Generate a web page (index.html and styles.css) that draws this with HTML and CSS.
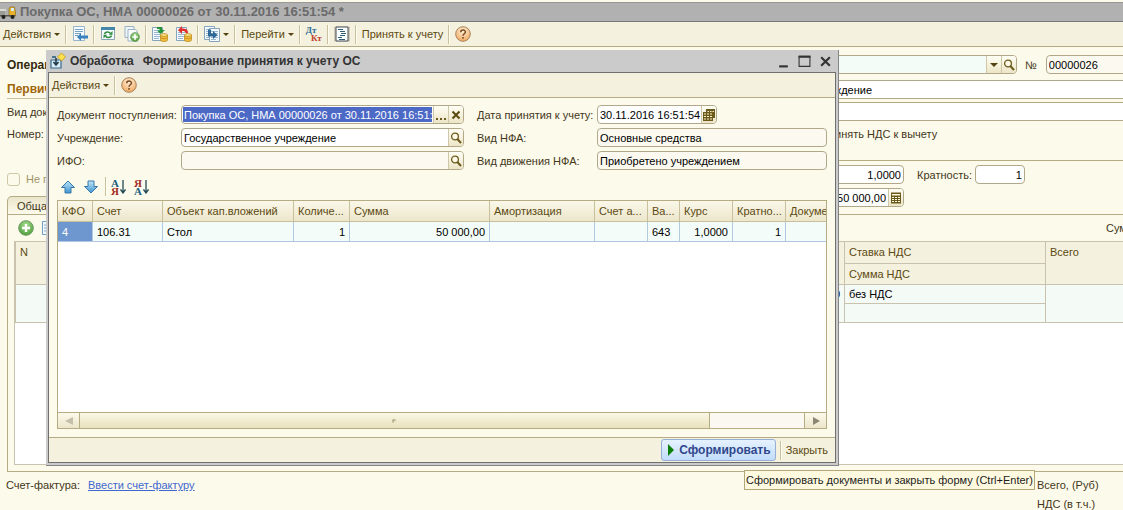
FILE: index.html
```html
<!DOCTYPE html>
<html lang="ru">
<head>
<meta charset="utf-8">
<title>Покупка ОС, НМА</title>
<link rel="stylesheet" href="styles.css">
</head>
<body>
<svg class="defs" aria-hidden="true">
  <defs>
    <linearGradient id="blue" x1="0" y1="0" x2="0" y2="1"><stop offset="0" stop-color="#bfe6fb"/><stop offset="1" stop-color="#3f93d0"/></linearGradient>
    <radialGradient id="orange" cx="0.5" cy="0.3" r="0.7"><stop offset="0" stop-color="#fff0d8"/><stop offset="1" stop-color="#f0a860"/></radialGradient>
    <radialGradient id="green" cx="0.5" cy="0.3" r="0.7"><stop offset="0" stop-color="#a8dc90"/><stop offset="1" stop-color="#4f9e3c"/></radialGradient>
    <symbol id="search" viewBox="0 0 12 12"><circle cx="5" cy="4.5" r="3.4" fill="#fffbe8" stroke="#6b5a1c" stroke-width="1.3"/><path d="M7.3 7 11 11" stroke="#6b5a1c" stroke-width="2"/></symbol>
    <symbol id="help" viewBox="0 0 16 16"><circle cx="8" cy="8" r="7.3" fill="url(#orange)" stroke="#a9845c"/><path d="M5.7 6.3C5.7 3.2 10.4 3.3 10.4 6 10.4 7.7 8 7.8 8 9.8M8 11v1.7" fill="none" stroke="#7c4a22" stroke-width="1.5"/></symbol>
    <symbol id="coins" viewBox="0 0 8 9"><path d="M.5 2v5c0 2 7 2 7 0V2z" fill="#f1bd3c" stroke="#b98514" stroke-width=".7"/><ellipse cx="4" cy="2" rx="3.5" ry="1.4" fill="#ffe58a" stroke="#b98514" stroke-width=".7"/><path d="M.5 4.3c0 1.8 7 1.8 7 0" fill="none" stroke="#b98514" stroke-width=".7"/></symbol>
    <symbol id="sheet" viewBox="0 0 11 14"><path d="M.5.5h10v13H.5z" fill="#f4faff" stroke="#86a5bd"/><path d="M2 3.5h7M2 5.5h7M2 7.5h7M2 9.5h7M2 11.5h5" stroke="#8eb1cc" stroke-width=".9"/></symbol>
  </defs>
</svg>

<main class="app">
  <header class="app-title">
    <svg class="icon" viewBox="0 0 16 16"><path d="M0 6h5v6H0z" fill="#9a9b93"/><path d="M0 5h6v2H0z" fill="#dadbd0"/><path d="M10 3h4.5l1 5v4H9V5z" fill="#e7b22a" stroke="#8b6d20" stroke-width=".7"/><path d="M11 4h3v3h-3z" fill="#d8eaf5"/><path d="M0 11h15v1.5H0z" fill="#55564e"/><circle cx="3.5" cy="13" r="2" fill="#202020"/><circle cx="12.5" cy="13" r="2" fill="#202020"/></svg>
    <h1>Покупка ОС, НМА 00000026 от 30.11.2016 16:51:54 *</h1>
  </header>

  <nav class="toolbar" aria-label="Документ">
    <button class="tool">Действия<i class="caret"></i></button><span class="sep"></span>
    <button class="tool" aria-label="К списку"><svg class="icon" viewBox="0 0 16 16"><path d="M1.5.5h11v14h-11z" fill="#f4faff" stroke="#9ab5c9"/><path d="M3 3.5h8M3 5.5h8M3 7.5h6M3 9.5h3" stroke="#78a2c2"/><path d="m5 11 4-4v2.6h7v3H9V15z" fill="#3982bd"/></svg></button><span class="sep"></span>
    <button class="tool" aria-label="Обновить"><svg class="icon" viewBox="0 0 16 16"><path d="M1.5 1.5h13v12h-13z" fill="#f6fbfd" stroke="#8ba2b1"/><path d="M1 1h14v3H1z" fill="#4387aa"/><path d="M4.500 8c.8-2.300 4.200-2.700 5.800-.8M11.500 9.500c-.8 2.300-4.200 2.700-5.800.8" fill="none" stroke="#2f8a40" stroke-width="1.700"/><path d="M8.800 8.800h3.700V5zM7.200 8.800H3.500v3.800z" fill="#2f8a40"/></svg></button>
    <button class="tool" aria-label="Скопировать"><svg class="icon" viewBox="0 0 16 16"><path d="M1 .5h9v11H1z" fill="#edf4f8" stroke="#9cb2c2"/><path d="M4 3.500h7.500L13.500 6v9H4z" fill="#f8fcff" stroke="#9cb2c2"/><circle cx="11" cy="11" r="4.500" fill="url(#green)" stroke="#64935b" stroke-width=".6"/><path d="M11 8.300v5.400M8.300 11h5.400" stroke="#fff" stroke-width="1.700"/></svg></button><span class="sep"></span>
    <button class="tool" aria-label="Провести"><svg class="icon" viewBox="0 0 16 16"><use href="#sheet" x="0" y="1" width="11" height="14"/><path d="M5 1h5v3h3L8.500 8 5 4.500h2.500V3H5z" fill="#249238"/><use href="#coins" x="8" y="7" width="8" height="9"/></svg></button>
    <button class="tool" aria-label="Отменить проведение"><svg class="icon" viewBox="0 0 16 16"><use href="#sheet" x="0" y="1" width="11" height="14"/><path d="m2 4 4-4v2.500c4 0 6 1 6 4.500h-2.500c0-1.500-1-2-3.500-2V8z" fill="#df302b"/><use href="#coins" x="8" y="7" width="8" height="9"/></svg></button><span class="sep"></span>
    <button class="tool" aria-label="Ввести на основании"><svg class="icon" viewBox="0 0 16 16"><use href="#sheet" x="0" y="0" width="11" height="14"/><use href="#sheet" x="5" y="2" width="11" height="14"/><path d="M4 3.500h3v4h2V5l4.500 4L9 13v-2.500H4z" fill="#2e6897"/></svg><i class="caret"></i></button><span class="sep"></span>
    <button class="tool">Перейти<i class="caret"></i></button><span class="sep"></span>
    <button class="tool dtkt" aria-label="Проводки"><span>Дт</span><span>Кт</span></button><span class="sep"></span>
    <button class="tool" aria-label="Журнал"><svg class="icon" viewBox="0 0 16 16"><path d="M0 .5h16v15H0z" fill="#cfc9b8"/><path d="M2 1h12v14H2z" fill="#fcffff" stroke="#444c55"/><path d="M4 3.500h5M6 5.500h5M7 7.500h5M6 9.500h5M4 11.500h4M5 13.500h6" stroke="#315c78"/></svg></button><span class="sep"></span>
    <button class="tool">Принять к учету</button><span class="sep"></span>
    <button class="tool" aria-label="Справка"><svg class="icon"><use href="#help"/></svg></button>
  </nav>

  <section class="form">
    <div class="form-left">
      <b class="row">Операция:</b>
      <h2 class="group">Первичный документ</h2>
      <span class="row">Вид документа:</span>
      <span class="row">Номер:</span>
      <label class="check"><input type="checkbox" disabled>Не погашать</label>
    </div>
    <div class="form-right">
      <div class="line first">
        <div class="field grow soft"><input aria-label="Операция"><button aria-label="Выбрать"><i class="caret big"></i></button><button aria-label="Открыть"><svg class="glass"><use href="#search"/></svg></button></div>
        <label for="num">№</label>
        <div class="field num cream"><input id="num" value="00000026"></div>
      </div>
      <div class="field bleed"><input aria-label="Учреждение" value="Государственное учреждение"></div>
      <div class="field bleed"><input aria-label="Контрагент"></div>
      <label class="vat"><input type="checkbox">Принять НДС к вычету</label>
      <div class="line money">
        <div class="field sum"><input aria-label="Курс" value="1,0000"></div>
        <label for="mult">Кратность:</label>
        <div class="field mult"><input id="mult" value="1"></div>
      </div>
      <div class="line">
        <div class="field sum"><input aria-label="Сумма" value="50 000,00"><button aria-label="Калькулятор"><svg class="glass" viewBox="0 0 12 12"><path d="M1 .5h10v11H1z" fill="#6b5a1c"/><path d="M2 2h8v1.500H2zM2 5h2v1H2zM5 5h2v1H5zM8 5h2v1H8zM2 7h2v1H2zM5 7h2v1H5zM8 7h2v1H8zM2 9h2v1H2zM5 9h2v1H5zM8 9h2v1H8z" fill="#fff8dc"/></svg></button></div>
      </div>
    </div>
  </section>

  <button class="tab">Общая</button>
  <section class="panel">
    <div class="panel-bar">
      <button class="tool" aria-label="Добавить"><svg class="icon" viewBox="0 0 16 16"><circle cx="8" cy="8" r="7.300" fill="url(#green)" stroke="#6b9960"/><path d="M8 4v8M4 8h8" stroke="#fff" stroke-width="2.400"/></svg></button>
      <button class="tool copy" aria-label="Скопировать строку"><svg class="icon" viewBox="0 0 16 16"><path d="M.5 1.500h10v13H.500z" fill="#f4faff" stroke="#6f9fc5"/><path d="M2 5h7M2 8h7M2 11h7" stroke="#7fa9cc"/></svg></button>
      <span class="total">Сумма</span>
    </div>
    <div class="sheet">
      <table class="back">
        <colgroup><col><col class="c-rate"><col class="c-all"></colgroup>
        <thead>
          <tr><th rowspan="2">N</th><th>Ставка НДС</th><th rowspan="2">Всего</th></tr>
          <tr><th>Сумма НДС</th></tr>
        </thead>
        <tbody>
          <tr><td rowspan="2" class="r">50 000,00</td><td>без НДС</td><td rowspan="2"></td></tr>
          <tr><td></td></tr>
        </tbody>
      </table>
    </div>
  </section>

  <footer class="foot">
    <span>Счет-фактура:</span><a href="#invoice">Ввести счет-фактуру</a>
    <div class="totals"><span>Всего, (Руб)</span><span>НДС (в т.ч.)</span></div>
  </footer>
</main>

<section class="dialog" role="dialog" aria-labelledby="dlg">
  <header class="dlg-title">
    <svg class="icon" viewBox="0 0 16 16"><path d="M1 7h10v8H1z" fill="#d9edf8" stroke="#386b8c" stroke-width="1.200"/><path d="M6 5v6M3.500 9 6 12l2.500-3" fill="none" stroke="#233c4d" stroke-width="1.600"/><path d="M2 4h4" stroke="#47748f" stroke-width="2"/><path d="m11.500 0 4 4-4 4-4-4z" fill="#ffe04d" stroke="#c39818" stroke-width=".8"/></svg>
    <h2 id="dlg"><span>Обработка</span><span>Формирование принятия к учету ОС</span></h2>
    <div class="win">
      <button aria-label="Свернуть"><svg viewBox="0 0 12 12"><path d="M2 10.500h8" stroke="#333" stroke-width="2"/></svg></button>
      <button aria-label="Развернуть"><svg viewBox="0 0 12 12"><path d="M1 1.500h10v9H1z" fill="none" stroke="#333"/><path d="M.5 1.500h11" stroke="#333" stroke-width="2"/></svg></button>
      <button aria-label="Закрыть окно"><svg viewBox="0 0 12 12"><path d="m2 2 8 8M10 2l-8 8" stroke="#333" stroke-width="2"/></svg></button>
    </div>
  </header>
  <div class="dlg-inner">
    <nav class="toolbar" aria-label="Обработка">
      <button class="tool">Действия<i class="caret"></i></button><span class="sep"></span>
      <button class="tool" aria-label="Справка"><svg class="icon"><use href="#help"/></svg></button>
    </nav>
    <div class="dlg-form">
      <label for="doc">Документ поступления:</label>
      <div class="field"><input id="doc" class="selected" value="Покупка ОС, НМА 00000026 от 30.11.2016 16:51:54"><button aria-label="Выбрать документ"><svg class="glass" viewBox="0 0 12 12"><path d="M1 9h2v2H1zM5 9h2v2H5zM9 9h2v2H9z" fill="#6b5a1c"/></svg></button><button aria-label="Очистить"><svg class="glass" viewBox="0 0 12 12"><path d="m2.500 2.500 7 7M9.500 2.500l-7 7" stroke="#5a4a12" stroke-width="2"/></svg></button></div>
      <label for="date">Дата принятия к учету:</label>
      <div class="field date"><input id="date" value="30.11.2016 16:51:54"><button aria-label="Календарь"><svg class="glass" viewBox="0 0 12 12"><path d="M3 0h9v9h-2v3H0V3h3z" fill="#6b5a1c"/><path d="M4.500 2h1.500v1H4.500zM7 2h1.500v1H7zM9.500 2H11v1H9.500zM1 4.500h2v1H1zM4 4.500h2v1H4zM7 4.500h2v1H7zM1 7h2v1H1zM4 7h2v1H4zM7 7h2v1H7zM1 9.500h2v1H1zM4 9.500h2v1H4zM7 9.500h2v1H7z" fill="#fff3c8"/></svg></button></div>
      <label for="org">Учреждение:</label>
      <div class="field"><input id="org" value="Государственное учреждение"><button aria-label="Открыть учреждение"><svg class="glass"><use href="#search"/></svg></button></div>
      <label for="nfa">Вид НФА:</label>
      <div class="field cream"><input id="nfa" value="Основные средства"></div>
      <label for="ifo">ИФО:</label>
      <div class="field cream"><input id="ifo"><button aria-label="Открыть ИФО"><svg class="glass"><use href="#search"/></svg></button></div>
      <label for="move">Вид движения НФА:</label>
      <div class="field cream"><input id="move" value="Приобретено учреждением"></div>
    </div>
    <div class="sortbar">
      <button class="tool" aria-label="Вверх"><svg class="icon" viewBox="0 0 16 16"><path d="m8 2 6.500 6.500H11V14H5V8.500H1.500z" fill="url(#blue)" stroke="#3878a8"/></svg></button>
      <button class="tool" aria-label="Вниз"><svg class="icon" viewBox="0 0 16 16"><path d="m8 14 6.500-6.500H11V2H5v5.500H1.500z" fill="url(#blue)" stroke="#3878a8"/></svg></button>
      <span class="sep"></span>
      <button class="tool sort" aria-label="По возрастанию"><span class="letters"><b class="a">А</b><b class="z">Я</b></span><svg viewBox="0 0 6 14"><path d="M3 0v12M.500 9.500 3 13l2.500-3.500" fill="none" stroke="#234b57" stroke-width="1.300"/></svg></button>
      <button class="tool sort" aria-label="По убыванию"><span class="letters"><b class="z">Я</b><b class="a">А</b></span><svg viewBox="0 0 6 14"><path d="M3 0v12M.500 9.500 3 13l2.500-3.500" fill="none" stroke="#234b57" stroke-width="1.300"/></svg></button>
    </div>
    <div class="grid">
      <div class="grid-body">
        <table class="front">
          <colgroup><col class="w35"><col class="w70"><col class="w131"><col class="w56"><col class="w140"><col class="w105"><col class="w53"><col class="w32"><col class="w53"><col class="w53"><col></colgroup>
          <thead><tr><th>КФО</th><th>Счет</th><th>Объект кап.вложений</th><th>Количе...</th><th>Сумма</th><th>Амортизация</th><th>Счет а...</th><th>Ва...</th><th>Курс</th><th>Кратно...</th><th>Докуме</th></tr></thead>
          <tbody><tr><td class="cur">4</td><td>106.31</td><td>Стол</td><td class="r">1</td><td class="r">50 000,00</td><td></td><td></td><td>643</td><td class="r">1,0000</td><td class="r">1</td><td></td></tr></tbody>
        </table>
      </div>
      <div class="scroll">
        <button aria-label="Влево"><svg viewBox="0 0 8 8"><path d="M8 0v8L0 4z" fill="#c4bfa9"/></svg></button>
        <div class="track"><div class="thumb"><i></i></div></div>
        <button aria-label="Вправо"><svg viewBox="0 0 8 8"><path d="M1 0v8l7-4z" fill="#8a8674"/></svg></button>
      </div>
    </div>
    <footer class="dlg-foot">
      <button class="primary"><svg viewBox="0 0 6 12"><path d="M0 0v12l6-6z" fill="#0a800a"/></svg>Сформировать</button>
      <span class="sep"></span>
      <button class="tool">Закрыть</button>
    </footer>
  </div>
</section>
<div class="tip" role="tooltip">Сформировать документы и закрыть форму (Ctrl+Enter)</div>
</body>
</html>
```

FILE: styles.css
```css
* { box-sizing: border-box; }
body {
  margin: 0;
  position: relative;
  min-height: 100vh;
  overflow: hidden;
  background: #fcfaea;
  color: #43371a;
  font: 11px/14px "Liberation Sans", Arial, sans-serif;
}
button, input { font: inherit; color: inherit; margin: 0; padding: 0; border: 0; background: none; }
h1, h2 { margin: 0; font-size: 12px; line-height: 16px; white-space: nowrap; }
.defs { position: absolute; width: 0; height: 0; }
.icon { display: block; width: 16px; height: 16px; flex: none; }
.caret { border: 3px solid transparent; border-top-color: #54430f; border-bottom: 0; }
.caret.big { border-width: 4px 4px 0; }

.app-title {
  display: flex; align-items: center; gap: 4px;
  height: 20px; margin-top: 2px;
  background: #b1b1b1; border-top: 1px solid #989898; border-bottom: 1px solid #777;
  color: #6a6a6a;
}
.app-title h1 { font-size: 13px; }

.toolbar {
  display: flex; align-items: center; gap: 5px;
  height: 25px; padding-left: 3px;
  background: #f4f1de; border-bottom: 1px solid #b5ac84;
  color: #5c4a12;
}
.tool { display: flex; align-items: center; gap: 3px; color: #5c4a12; white-space: nowrap; }
.tool + .tool { margin-left: 3px; }
.sep { width: 2px; height: 19px; border-left: 1px solid #c9c19e; border-right: 1px solid #fffdf0; }
.dtkt { display: grid; grid-template-columns: 5px 11px; gap: 0; font: bold 9px/8px "Liberation Serif", serif; height: 16px; }
.dtkt span:first-child { color: #2d6d96; align-self: start; }
.dtkt span:last-child { color: #c0402c; align-self: end; }

.form { display: grid; grid-template-columns: 710px minmax(0, 1fr); padding-left: 7px; height: 149px; }
.form-left { display: flex; flex-direction: column; padding-top: 8px; }
.row { height: 22px; line-height: 20px; }
.form-left b { font-size: 12px; color: #33290d; }
.group { height: 20px; margin: 2px 0 3px; line-height: 21px; color: #a0650c; border-bottom: 1px solid #c9c19e; }
.check { display: flex; align-items: center; gap: 6px; margin-top: 26px; color: #a09468; }
.check input, .vat input { appearance: none; width: 13px; height: 13px; border: 1px solid #cfc8a8; border-radius: 3px; }
.form-right { padding-top: 8px; display: flex; flex-direction: column; gap: 3px; }
.line { display: flex; align-items: center; }
.line.first { margin-bottom: 3px; }
.line.first label { margin: 0 9px 0 8px; }
.grow { width: 300px; }
.num { flex: 1; margin-right: -9px; }
.bleed { margin-right: -9px; }
.vat { display: flex; align-items: center; gap: 6px; height: 37px; margin-bottom: 1px; padding: 0 0 16px 85px; border-bottom: 1px solid #b5ac84; }
.money { gap: 3px; margin-bottom: 1px; }
.money label { margin-left: 10px; }
.sum { width: 187px; }
.mult { width: 50px; }
.sum input, .mult input { text-align: right; padding-right: 2px; }

.field {
  display: flex; height: 19px; overflow: hidden;
  background: #fff; border: 1px solid #b0a888; border-radius: 4px; color: #000;
}
.field.soft { background: #f4fcf8; }
.field.cream { background: #fcfaf0; }
.field input { flex: 1; min-width: 0; height: 17px; padding-left: 2px; outline: 0; }
.field input.selected { height: 15px; margin: 1px; padding-left: 1px; background: #4d69c6; color: #fff; }
.field button {
  display: flex; align-items: center; justify-content: center; width: 15px;
  border-left: 1px solid #cfc8a8; background: linear-gradient(#fffef4, #ece5c6);
}
.glass { width: 12px; height: 12px; flex: none; }

.tab {
  display: block; height: 18px; width: 90px; margin-left: 7px; padding-left: 9px; text-align: left;
  background: linear-gradient(#eae5cb, #fcfaea); border: 1px solid #b5ac84; border-bottom: 0; border-radius: 5px 5px 0 0;
}
.panel { margin: 0 -9px 0 7px; padding: 0 0 6px 6px; border: 1px solid #b5ac84; }
.panel-bar { display: flex; align-items: center; height: 26px; padding-left: 4px; }
.panel-bar .copy { margin-left: 8px; }
.panel-bar .total { margin-left: auto; width: 25px; white-space: nowrap; }
.sheet { height: 224px; background: #fff; border: 1px solid #c8c2ae; }
.back { width: 100%; table-layout: fixed; border-collapse: collapse; }
.c-rate { width: 201px; }
.c-all { width: 84px; }
.back th { height: 21px; padding: 0 4px; text-align: left; vertical-align: top; line-height: 20px; font-weight: normal; color: #5c4a12; background: #f4f1de; border: 1px solid #c8c2ae; border-top: 0; }
.back td { height: 19px; padding: 0 4px; line-height: 18px; background: #f4faf6; border: 1px solid #c8c2ae; color: #000; vertical-align: top; }
.r { text-align: right; }

.foot { display: flex; padding: 6px 0 0 6px; gap: 8px; }
.foot a { color: #3f68d0; }
.totals { display: flex; flex-direction: column; gap: 5px; width: 86px; margin-left: auto; }

.dialog {
  position: absolute; left: 46px; right: 284px; top: 50px;
  padding: 0 2px 2px 2px; background: #cbcbcb; border-right: 1px solid #858585; border-bottom: 1px solid #858585;
}
.dlg-title { display: flex; align-items: center; gap: 4px; height: 22px; padding-left: 2px; color: #333; }
.dlg-title h2 { display: flex; gap: 9px; }
.win { display: flex; gap: 8px; margin-left: auto; padding-right: 4px; }
.win svg { display: block; width: 13px; height: 13px; }
.dlg-inner { border: 1px solid #707070; background: #fcfaea; }
.dlg-form {
  display: grid; grid-template-columns: 124px minmax(0, 283px) 133px minmax(0, 230px);
  row-gap: 4px; align-items: center; padding: 7px 8px 0 8px; white-space: nowrap;
}
.dlg-form label:nth-of-type(even) { padding-left: 13px; }
.date { width: 120px; }
.sortbar { display: flex; align-items: center; gap: 4px; height: 30px; padding: 3px 0 0 11px; }
.sortbar .sep { margin-left: 2px; }
.sort { gap: 1px; }
.sort + .sort { margin-left: 4px; }
.sort svg { width: 6px; height: 14px; }
.letters { display: grid; font: bold 11px/8px "Liberation Serif", serif; }
.a { color: #205f80; }
.z { color: #a02c24; }
.grid { margin: 0 8px; border: 1px solid #b5ac84; }
.grid-body { height: 211px; background: #fff; overflow: hidden; }
.front { width: 100%; table-layout: fixed; border-collapse: separate; border-spacing: 0; }
.front th, .front td { overflow: hidden; white-space: nowrap; padding: 0 4px; }
.front th { height: 21px; padding-right: 0; text-align: left; font-weight: normal; color: #5c4a12; background: linear-gradient(#fbf8ea, #ece6ca); border-right: 1px solid #c8c09c; border-bottom: 1px solid #c8c09c; }
.front td { height: 20px; color: #000; background: #f4fcf9; border-right: 1px solid #b0c8e0; border-bottom: 1px solid #b0c8e0; }
.front tr > :last-child { border-right: 0; }
.front td.cur { background: #6f97cf; color: #fff; }
.w35 { width: 35px; } .w70 { width: 70px; } .w131 { width: 131px; } .w56 { width: 56px; } .w140 { width: 140px; }
.w105 { width: 105px; } .w53 { width: 53px; } .w32 { width: 32px; }
.scroll { display: flex; height: 16px; border-top: 1px solid #b5ac84; }
.scroll button { display: grid; place-items: center; width: 21px; background: linear-gradient(#fbf9ea, #ece6ca); }
.scroll svg { width: 8px; height: 8px; }
.track { flex: 1; background: #faf8f0; border: solid #b5ac84; border-width: 0 1px; }
.thumb { display: grid; place-items: center; width: 87%; height: 100%; background: linear-gradient(#faf7e4, #e9e2bf); border-right: 1px solid #b5ac84; }
.thumb i { width: 4px; height: 4px; border: solid #b9b391; border-width: 2px 0 0 2px; border-radius: 2px; }
.dlg-foot {
  display: flex; align-items: center; justify-content: flex-end; gap: 4px;
  height: 25px; margin-top: 8px; padding-right: 7px;
  background: #f4f1de; border-top: 1px solid #b5ac84;
}
.primary {
  display: flex; align-items: center; gap: 5px; height: 22px; padding: 0 4px 0 6px;
  font-size: 12px; font-weight: bold; color: #30488c;
  background: linear-gradient(#e6f2ff, #c2dcfa); border: 1px solid #95afd6; border-radius: 3px;
}
.primary svg { width: 6px; height: 12px; }
.tip {
  position: absolute; left: 744px; top: 470px; padding: 2px 1px; white-space: nowrap;
  background: #fffadf; border: 1px solid #b5a878; color: #1c1c1c;
}
```
